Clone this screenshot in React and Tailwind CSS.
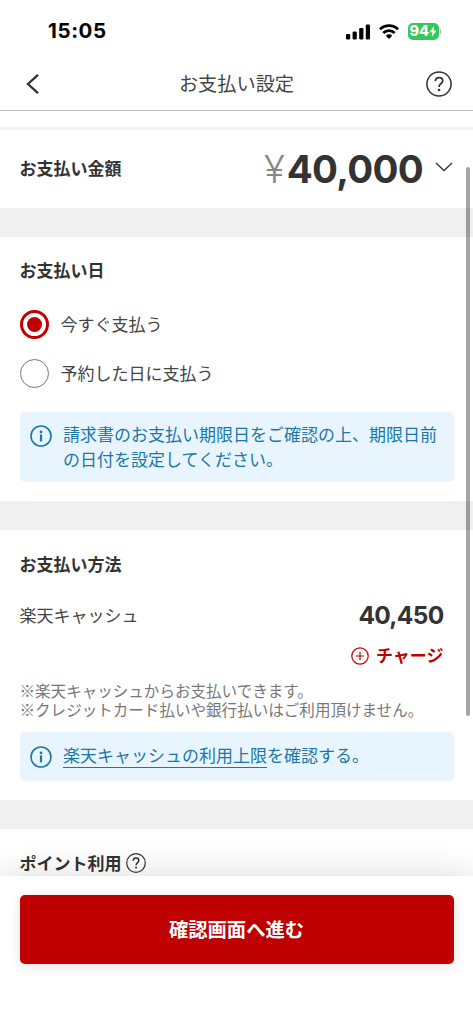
function StatusBar() {
  return (
    <div className="flex h-[57px] items-center justify-between pt-[6px] pr-[32px] pl-[48px] font-['Inter',sans-serif]">
      <span className="text-[20.5px] leading-none font-bold tracking-[0.6px] text-black">
        15:05
      </span>
      <div className="flex items-center gap-[9px]">
        <svg className="h-[16px] w-[24px]" viewBox="0 0 24 16" fill="#000">
          <rect x="0" y="10" width="4.2" height="5.5" rx="1.3" />
          <rect x="6.6" y="7.4" width="4.2" height="8.1" rx="1.3" />
          <rect x="13.2" y="4" width="4.2" height="11.5" rx="1.3" />
          <rect x="19.8" y="0.5" width="4.2" height="15" rx="1.3" />
        </svg>
        <svg
          className="h-[15px] w-[20px]"
          viewBox="0 0 20 15"
          fill="none"
          stroke="#000"
          strokeWidth="2.9"
        >
          <path d="M1 5.3a12.8 12.8 0 0 1 18 0" />
          <path d="M4.3 9a8 8 0 0 1 11.4 0" />
          <path d="M10 14.9 6.8 11.7a4.5 4.5 0 0 1 6.4 0z" fill="#000" stroke="none" />
        </svg>
        <div className="flex items-center gap-px">
          <div className="flex h-[17px] w-[30.5px] items-center justify-center rounded-[5px] bg-[#34c759] text-white">
            <span className="text-[14.5px] leading-none font-extrabold">94</span>
            <svg className="h-[11px] w-[8px]" viewBox="0 0 8 11" fill="currentColor">
              <path d="M5.2 0 .5 6.2h3L2.7 11l4.9-6.4H4.5z" />
            </svg>
          </div>
          <span className="h-[5px] w-[1.5px] rounded-r bg-[#b5b5b5]" />
        </div>
      </div>
    </div>
  )
}

function HelpIcon({ className, strokeWidth = 1.3 }) {
  return (
    <svg
      className={className}
      viewBox="0 0 26 26"
      fill="none"
      stroke="#333"
      strokeWidth={strokeWidth}
    >
      <circle cx="13" cy="13" r="12.1" />
      <path
        d="M9.4 10.1c.1-2.1 1.6-3.5 3.7-3.5s3.6 1.3 3.6 3.2c0 1.5-.8 2.2-1.9 3-1.2.9-1.7 1.5-1.7 3.1"
        strokeWidth={strokeWidth * 1.2}
      />
      <circle cx="13.1" cy="19" r="1.3" fill="#333" stroke="none" />
    </svg>
  )
}

function InfoBox({ children, className }) {
  return (
    <div
      className={`flex items-start rounded-[5px] bg-[#e8f5ff] pr-3 pl-[10.5px] text-[17px] leading-[25px] text-[#1b77a5] ${className}`}
    >
      <svg
        className="mt-[4px] mr-[11px] h-[22px] w-[22px] shrink-0"
        viewBox="0 0 22 22"
        fill="none"
        stroke="currentColor"
      >
        <circle cx="11" cy="11" r="10" strokeWidth="1.6" />
        <path d="M11 9.4v7" strokeWidth="2.2" />
        <circle cx="11" cy="6.9" r="1.4" fill="currentColor" stroke="none" />
      </svg>
      <p className="whitespace-nowrap">{children}</p>
    </div>
  )
}

function Radio({ checked, label }) {
  return (
    <label className="flex h-[29px] items-center gap-[12px] text-[17px] text-[#444]">
      {checked ? (
        <span className="flex h-[29px] w-[29px] items-center justify-center rounded-full border-3 border-[#bf0000]">
          <span className="h-[15px] w-[15px] rounded-full bg-[#bf0000]" />
        </span>
      ) : (
        <span className="h-[29px] w-[29px] rounded-full border border-[#777]" />
      )}
      <span className="pb-[3px] leading-none">{label}</span>
    </label>
  )
}

function Divider() {
  return <div className="h-[29px] shrink-0 bg-[#f0f0f0]" />
}

export default function App() {
  return (
    <div
      lang="ja"
      className="relative flex h-[1024px] w-[473px] flex-col overflow-hidden bg-white font-['Noto_Sans_CJK_JP',sans-serif] text-[#333]"
    >
      <StatusBar />
      <header className="flex h-[54px] shrink-0 items-center justify-between border-b border-[#c4c4c4] pr-[21px] pl-[26px]">
        <svg
          className="h-[20px] w-[13px]"
          viewBox="0 0 13 20"
          fill="none"
          stroke="#333"
          strokeWidth="2.3"
        >
          <path d="M12 .8 2 10l10 9.2" />
        </svg>
        <h1 className="pl-[8px] text-[19.2px] leading-none text-[#444]">お支払い設定</h1>
        <HelpIcon className="h-[26px] w-[26px]" strokeWidth={1.5} />
      </header>

      <main className="flex h-[765px] shrink-0 flex-col overflow-hidden">
        <div className="mt-[16px] h-[3px] shrink-0 bg-[#f3f3f3]" />
        <section className="flex h-[78px] shrink-0 items-center justify-between pr-[20px] pl-[19.5px]">
          <h2 className="pb-[2px] text-[17px] font-bold">お支払い金額</h2>
          <div className="flex items-center font-['Inter',sans-serif] text-[38.5px] leading-none">
            <span className="mr-[2px] font-light text-[#888]">¥</span>
            <span className="font-bold tracking-[-0.7px]">40,000</span>
            <svg
              className="mb-[4px] ml-[12px] h-[10px] w-[18px]"
              viewBox="0 0 18 10"
              fill="none"
              stroke="#333"
              strokeWidth="1.3"
            >
              <path d="M1 1l8 7.5L17 1" />
            </svg>
          </div>
        </section>
        <Divider />

        <section className="h-[264px] shrink-0 px-[19.5px] pt-[20px]">
          <h2 className="text-[17px] leading-[25px] font-bold">お支払い日</h2>
          <div className="mt-[28px] flex flex-col gap-[20px]">
            <Radio checked label="今すぐ支払う" />
            <Radio label="予約した日に支払う" />
          </div>
          <InfoBox className="mt-[23.5px] h-[70px] pt-[9px]">
            請求書のお支払い期限日をご確認の上、期限日前
            <br />
            の日付を設定してください。
          </InfoBox>
        </section>
        <Divider />

        <section className="h-[270px] shrink-0 px-[19.5px] pt-[21px]">
          <h2 className="text-[17px] leading-[25px] font-bold">お支払い方法</h2>
          <div className="mt-[24px] flex h-[30px] items-center justify-between pr-[10px]">
            <span className="pb-px text-[17px] text-[#444]">楽天キャッシュ</span>
            <span className="font-['Inter',sans-serif] text-[24.5px] font-bold tracking-[-0.7px]">
              40,450
            </span>
          </div>
          <div className="mt-[13px] flex h-[26px] items-center justify-end gap-[7px] pr-[10px] text-[#bf0000]">
            <svg
              className="h-[18px] w-[18px]"
              viewBox="0 0 18 18"
              fill="none"
              stroke="currentColor"
              strokeWidth="1.2"
            >
              <circle cx="9" cy="9" r="8.2" />
              <path d="M9 5v8M5 9h8" />
            </svg>
            <span className="pb-[3px] text-[17px] leading-none font-bold">チャージ</span>
          </div>
          <div className="mt-[12px] text-[15.55px] leading-[19px] whitespace-nowrap text-[#777]">
            <p>※楽天キャッシュからお支払いできます。</p>
            <p>※クレジットカード払いや銀行払いはご利用頂けません。</p>
          </div>
          <InfoBox className="mt-[13px] h-[49px] pt-[10px]">
            <a className="border-b border-[#1b77a5]">楽天キャッシュの利用上限</a>
            を確認する。
          </InfoBox>
        </section>
        <Divider />

        <section className="flex shrink-0 items-center gap-[4px] px-[19.5px] pt-[21px]">
          <h2 className="text-[17px] leading-[25px] font-bold">ポイント利用</h2>
          <HelpIcon className="h-[20px] w-[20px]" strokeWidth={1.6} />
        </section>
      </main>

      <footer className="relative flex-1 bg-white px-[19.5px] pt-[19px] shadow-[0_0_32px_rgba(0,0,0,0.15)]">
        <button
          type="button"
          className="flex h-[68.5px] w-full items-center justify-center rounded-[5px] bg-[#bf0000] text-[19.3px] font-bold text-white shadow-[0_2px_12px_rgba(0,0,0,0.12)]"
        >
          確認画面へ進む
        </button>
      </footer>

      {/* scroll indicator */}
      <div className="absolute top-[167px] right-[3.5px] h-[549px] w-[3.5px] rounded-full bg-black/35" />
    </div>
  )
}
